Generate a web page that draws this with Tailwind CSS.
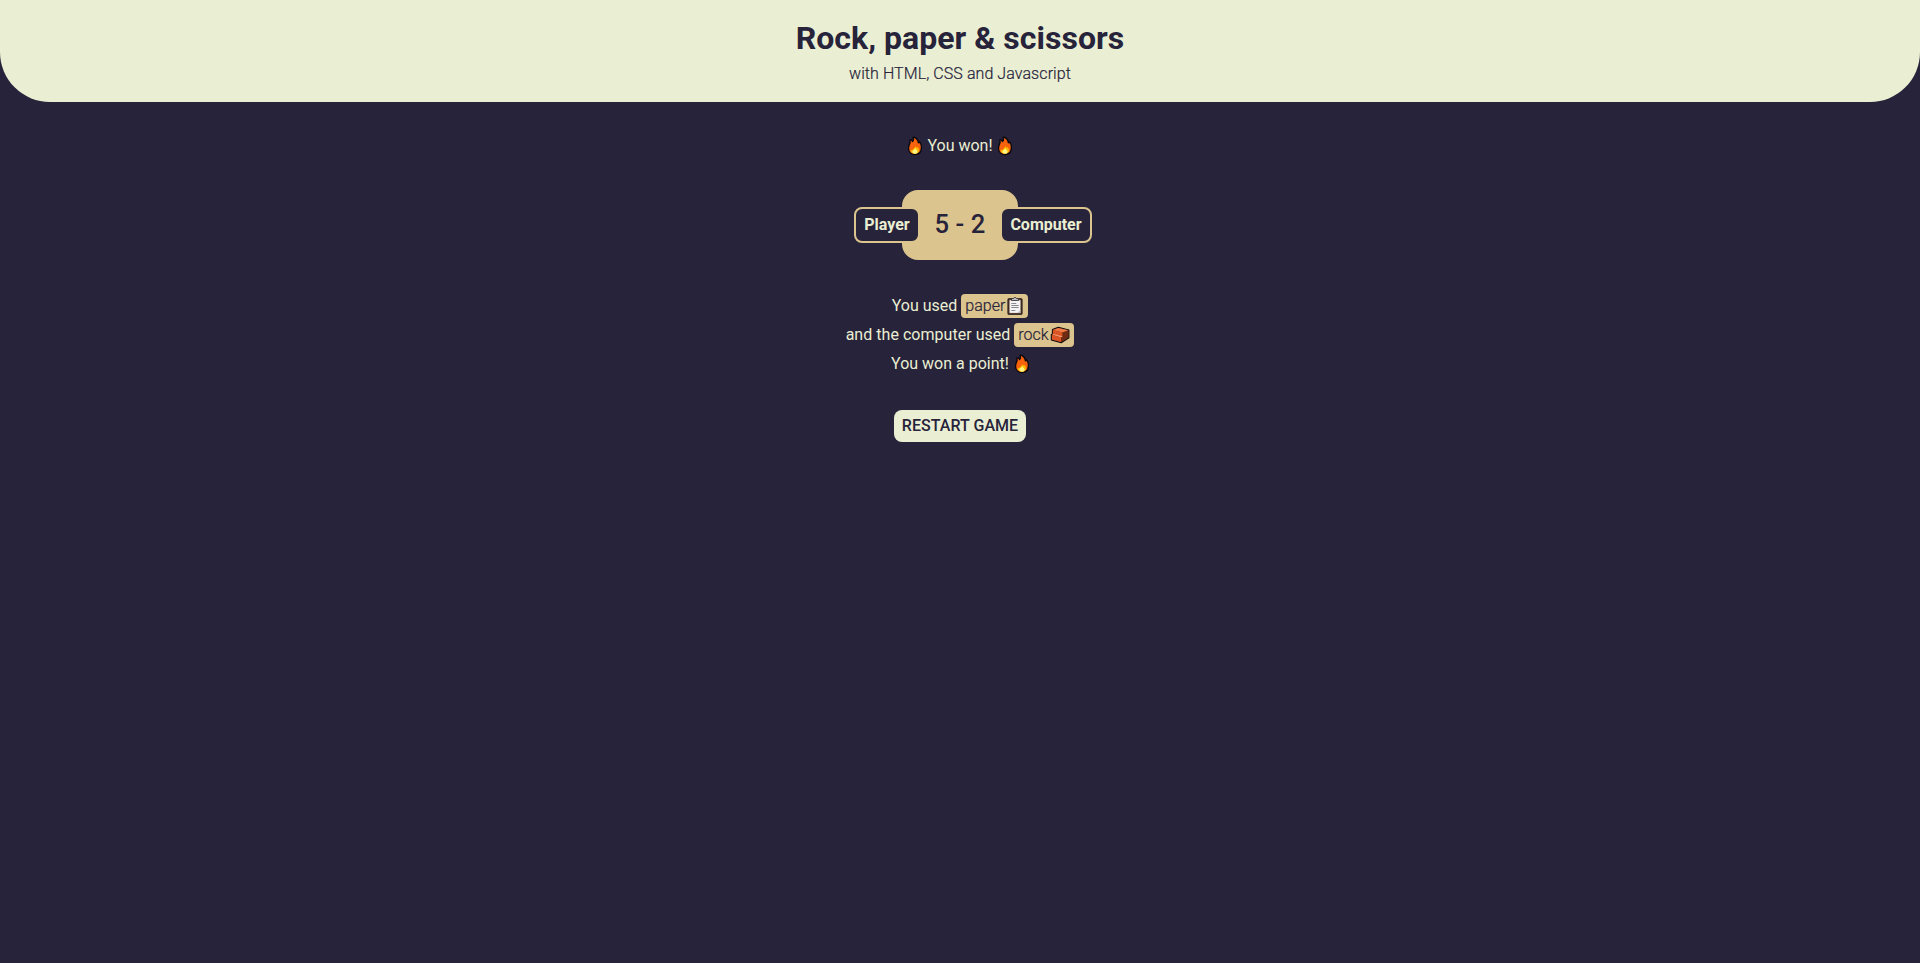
<!DOCTYPE html>
<html lang="en">
<head>
<meta charset="utf-8">
<title>Rock, paper &amp; scissors</title>
<script src="https://cdn.jsdelivr.net/npm/@tailwindcss/browser@4"></script>
</head>
<body class="min-h-screen bg-[#27233a] text-[#eaefd3] font-['Roboto',sans-serif] text-base text-center">
<svg class="hidden">
  <symbol id="fire" viewBox="3 0 14 20">
    <path d="M8 1.500C9.200 1 11 2 12 3.200c1 1.300 1.300 2.300 1.400 3.500l1-.9c1.400 1.500 2.200 4 2 6.600-.3 3.600-2.800 6.100-6.400 6.100s-6.400-2.500-6.500-6.100c-.1-2.500 1-4.200 1.600-5.800l-.3-2.400 1.500-.3 1.300 1.600C8.600 4.700 8.600 3 8 1.500Z" fill="#f7630c" stroke="#0b0810" stroke-width="1.400" stroke-linejoin="round"/>
    <path d="M10.300 10c.4 1.300 1.200 1.700 2.300 1.300 1.500 1.300 1.900 2.900 1.100 4.400-.7 1.300-2 2-3.600 2-2.900 0-4.600-1.600-4.600-4 1 .6 1.600.4 2.300-.3C8.800 12.500 10.100 11.700 10.300 10Z" fill="#ffb900"/>
    <path d="M10.300 12.200c.5 1.400 2.300 2 2.300 3.600 0 1.200-1 1.900-2.500 1.900s-2.700-.8-2.700-2c0-1.500 2.100-2.200 2.900-3.500Z" fill="#fff580"/>
  </symbol>
  <symbol id="clipboard" viewBox="2 0 16 20">
    <rect x="3" y="2.700" width="14" height="15.600" rx="1" fill="#6b4a38" stroke="#171014" stroke-width="1.100"/>
    <rect x="4.600" y="4.200" width="10.800" height="12.700" fill="#f4f4f4"/>
    <path d="M6.500 4.500V2.500h2a1.600 1.600 0 0 1 3 0h2v2Z" fill="#b9bdc0" stroke="#332a2e" stroke-width=".8"/>
    <path d="M6.300 7.500h5M6.300 9.500h7.400M6.300 11.500h7.400M6.300 14.500h4" stroke="#88898d" stroke-width="1"/>
    <path d="M12.400 16.900 15.400 13.900v3Z" fill="#b8bcc0"/>
  </symbol>
  <symbol id="brick" viewBox="0 0 20 20">
    <path d="M1.300 9.600V15L11.200 17.800 18.900 12.800V5L8.300 2.300 2.400 4.600v4.400Z" fill="#8f3816" stroke="#100b10" stroke-width="1.100" stroke-linejoin="round"/>
    <path d="M2.900 5 8.300 2.900l10 2.400-5.800 2.300Z" fill="#f07a45"/>
    <path d="M2.900 5 12.500 7.600v3.900L2.900 9Z" fill="#dc5424"/>
    <path d="M1.900 9.800 3.500 9l9.500 2.300-1.800 1.300Z" fill="#f59468"/>
    <path d="M1.900 9.900 11.200 12.600v4.500l-9.300-2.500Z" fill="#dc5424"/>
    <path d="M12.500 7.600 18.300 5.400v7.100l-7.100 4.600v-4.500l1.800-1.300-.5-.1Z" fill="#702b12"/>
  </symbol>
</svg>
<header class="flex h-[102px] flex-col items-center rounded-b-[50px] bg-[#eaefd3] pt-[19px] text-[#27233a]">
  <h1 class="text-[32px] leading-[38px] font-bold tracking-[0.03px]">Rock, paper &amp; scissors</h1>
  <p class="mt-[7px] leading-[19px] font-light tracking-[0.08px] [-webkit-text-stroke:0.2px_#27233a]">with HTML, CSS and Javascript</p>
</header>
<main class="flex flex-col items-center">
  <p class="mt-8 flex h-6 items-center gap-[5px] leading-6"><svg class="h-5 w-3.5"><use href="#fire"/></svg><span>You won!</span><svg class="h-5 w-3.5"><use href="#fire"/></svg></p>
  <section class="relative mt-8 flex h-[70px] w-[116px] items-center justify-center rounded-2xl bg-[#dcc48e] text-[#27233a]">
    <span class="-mt-0.5 text-[25.600px] leading-[30px] font-medium tracking-[0.1px]">5 - 2</span>
    <span class="absolute top-[17px] right-[98px] h-9 w-[66px] rounded-lg border-2 border-[#dcc48e] bg-[#27233a] leading-8 font-bold text-[#eaefd3]">Player</span>
    <span class="absolute top-[17px] left-[98px] h-9 w-[92px] rounded-lg border-2 border-[#dcc48e] bg-[#27233a] leading-8 font-bold text-[#eaefd3]">Computer</span>
  </section>
  <section class="mt-[34px] flex flex-col items-center gap-[5px] leading-6">
    <p class="flex h-6 items-center gap-1"><span>You used</span><span class="flex h-6 w-[67px] items-center rounded bg-[#dcc48e] pl-1 font-light text-[#27233a] [-webkit-text-stroke:0.2px_#27233a]">paper<svg class="ml-0.5 h-5 w-4"><use href="#clipboard"/></svg></span></p>
    <p class="flex h-6 items-center gap-1"><span class="tracking-[0.03px]">and the computer used</span><span class="flex h-6 w-[60px] items-center rounded bg-[#dcc48e] pl-1 font-light text-[#27233a] [-webkit-text-stroke:0.2px_#27233a]">rock<svg class="ml-px h-5 w-5"><use href="#brick"/></svg></span></p>
    <p class="flex h-6 items-center gap-1.5"><span>You won a point!</span><svg class="h-5 w-3.5"><use href="#fire"/></svg></p>
  </section>
  <button class="mt-[34px] h-8 w-[132px] rounded-lg bg-[#eaefd3] leading-8 font-medium tracking-[0.05px] whitespace-nowrap text-[#27233a]">RESTART GAME</button>
</main>
</body>
</html>
